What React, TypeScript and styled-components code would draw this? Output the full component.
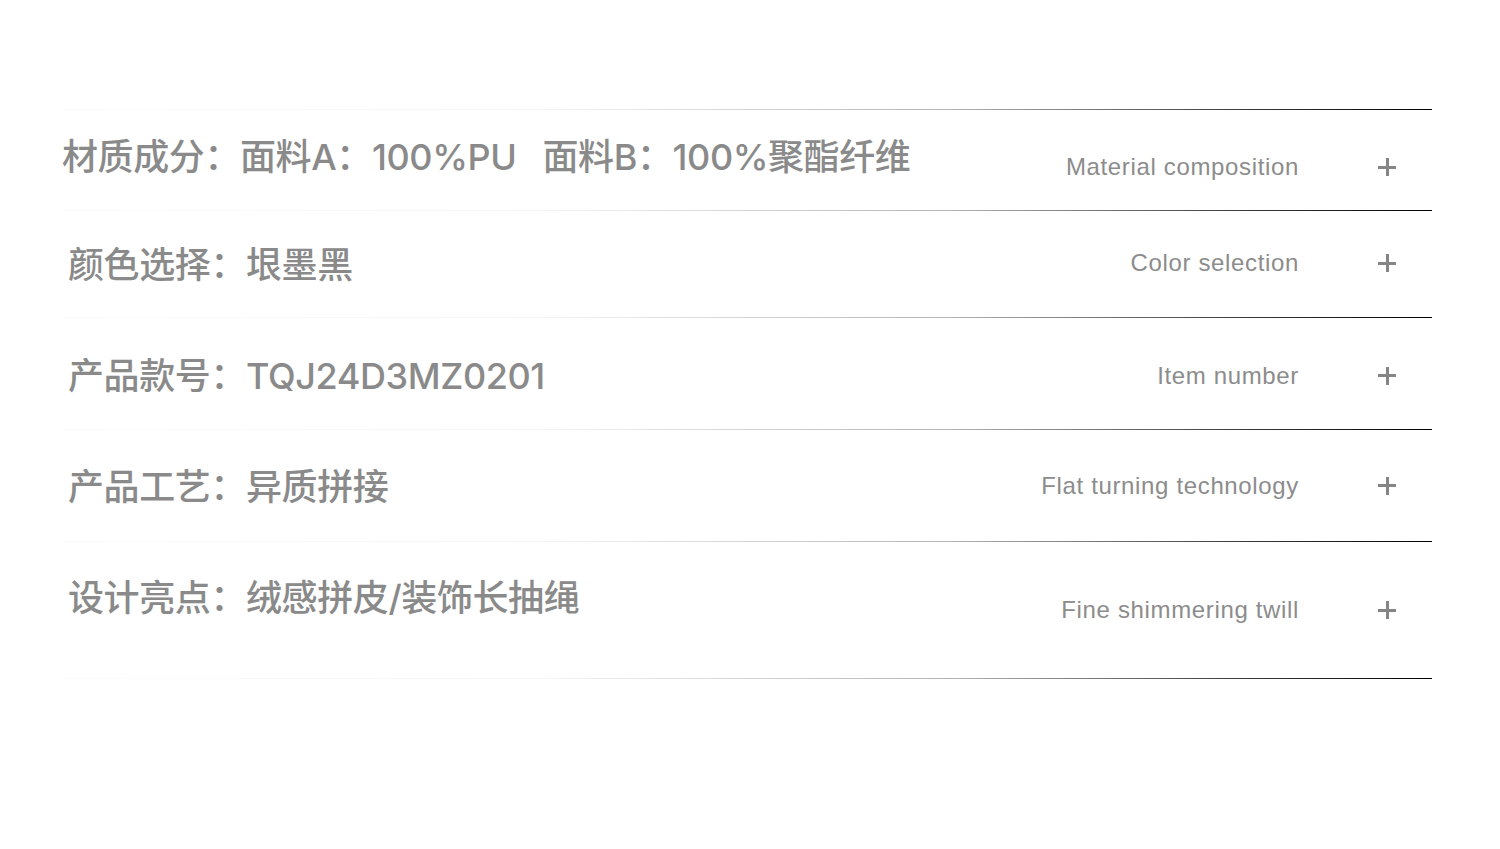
import React from "react";
import styled, { createGlobalStyle } from "styled-components";

const Global = createGlobalStyle`
  html, body { margin: 0; padding: 0; background: #ffffff; }
  body { font-family: "Noto Sans CJK SC", "Noto Sans", sans-serif; }
`;

const Page = styled.div`
  width: 1500px;
  height: 849px;
  padding-top: 109px;
  box-sizing: border-box;
  background: #ffffff;
`;

const List = styled.div`
  margin-left: 65px;
  width: 1367px;
  display: flex;
  flex-direction: column;
`;

const Divider = styled.div`
  height: 1px;
  background: linear-gradient(
    to right,
    rgba(0, 0, 0, 0.01) 0%,
    rgba(0, 0, 0, 0.04) 35%,
    rgba(0, 0, 0, 0.3) 65%,
    rgba(0, 0, 0, 0.75) 85%,
    rgba(0, 0, 0, 1) 100%
  );
`;

const Row = styled.div<{ $h: number }>`
  height: ${(p) => p.$h}px;
  display: flex;
  align-items: center;
`;

const Label = styled.div<{ $indent: number; $shift: number }>`
  margin-left: ${(p) => p.$indent}px;
  margin-top: ${(p) => p.$shift * 2}px;
  flex: 1;
  font-family: Inter, "Noto Sans CJK SC", sans-serif;
  font-size: 36px;
  font-weight: 500;
  line-height: 1;
  letter-spacing: -0.4px;
  color: #8a8a8a;
  white-space: nowrap;
`;

const Part = styled.span`
  margin-right: 26px;
`;

const English = styled.div<{ $shift: number }>`
  margin-top: ${(p) => p.$shift * 2}px;
  font-family: "Liberation Sans", Arial, sans-serif;
  font-size: 24px;
  line-height: 1;
  color: #8c8c8c;
  white-space: nowrap;
  letter-spacing: 0.65px;
`;

const Plus = styled.div<{ $shift: number }>`
  margin-top: ${(p) => p.$shift * 2}px;
  margin-left: 79px;
  margin-right: 36px;
  width: 18px;
  height: 18px;
  position: relative;
  flex: none;
  &::before,
  &::after {
    content: "";
    position: absolute;
    background: #858585;
  }
  &::before {
    left: 0;
    right: 0;
    top: 7.5px;
    height: 3px;
  }
  &::after {
    top: 0;
    bottom: 0;
    left: 7.5px;
    width: 3px;
  }
`;

type Item = {
  h: number;
  indent: number;
  cnShift: number;
  enShift: number;
  cn: string[];
  en: string;
};

const items: Item[] = [
  {
    h: 100,
    indent: -3,
    cnShift: -3,
    enShift: 7,
    cn: ["材质成分：面料A：100%PU", "面料B：100%聚酯纤维"],
    en: "Material composition",
  },
  { h: 106, indent: 3, cnShift: 1, enShift: -1, cn: ["颜色选择：垠墨黑"], en: "Color selection" },
  { h: 111, indent: 3, cnShift: 2, enShift: 2, cn: ["产品款号：TQJ24D3MZ0201"], en: "Item number" },
  { h: 111, indent: 3, cnShift: 1, enShift: 0, cn: ["产品工艺：异质拼接"], en: "Flat turning technology" },
  { h: 136, indent: 3, cnShift: -12, enShift: 0, cn: ["设计亮点：绒感拼皮/装饰长抽绳"], en: "Fine shimmering twill" },
];

export default function App() {
  return (
    <>
      <Global />
      <Page>
        <List>
          <Divider />
          {items.map((it) => (
            <React.Fragment key={it.en}>
              <Row $h={it.h}>
                <Label $indent={it.indent} $shift={it.cnShift}>
                  {it.cn.map((c) => (
                    <Part key={c}>{c}</Part>
                  ))}
                </Label>
                <English $shift={it.enShift}>{it.en}</English>
                <Plus $shift={it.enShift} />
              </Row>
              <Divider />
            </React.Fragment>
          ))}
        </List>
      </Page>
    </>
  );
}
